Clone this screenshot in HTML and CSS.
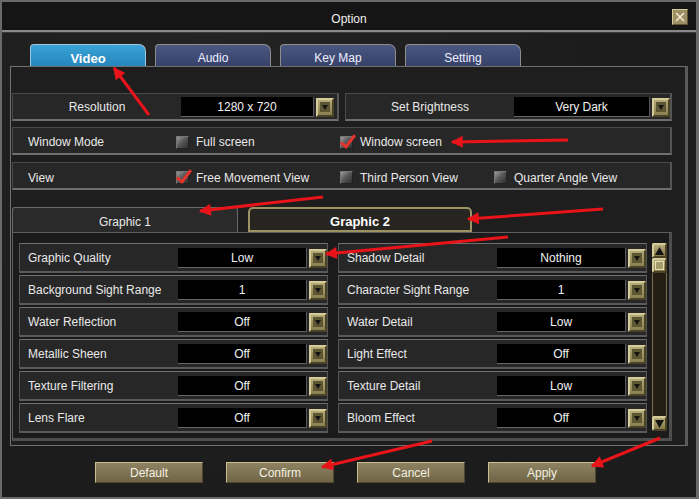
FILE: index.html
```html
<!DOCTYPE html>
<html lang="en">
<head>
  <meta charset="UTF-8">
  <title>Option</title>
  <link rel="stylesheet" href="styles.css">
</head>
<body>
  <div class="window">
    <div class="titlebar">
      <span></span>
      <span class="title">Option</span>
      <span class="close">
        <svg width="10" height="10" viewBox="0 0 10 10"><path d="M1 1L9 9M9 1L1 9" stroke="#f1ead0" stroke-width="1.6"/></svg>
      </span>
    </div>

    <div class="tabs">
      <div class="tab active">Video</div>
      <div class="tab">Audio</div>
      <div class="tab">Key Map</div>
      <div class="tab">Setting</div>
    </div>

    <div class="panel">
      <div class="split">
        <div class="box">
          <div class="cap">Resolution</div>
          <div class="field res">1280 x 720</div>
          <span class="drop"><svg width="10" height="10" viewBox="0 0 10 10"><rect width="10" height="10" fill="#5e5633"/><path d="M2 3H8L5 8Z" fill="#141414"/></svg></span>
        </div>
        <div class="box">
          <div class="cap">Set Brightness</div>
          <div class="field bright">Very Dark</div>
          <span class="drop"><svg width="10" height="10" viewBox="0 0 10 10"><rect width="10" height="10" fill="#5e5633"/><path d="M2 3H8L5 8Z" fill="#141414"/></svg></span>
        </div>
      </div>

      <div class="box wide">
        <div class="name">Window Mode</div>
        <label class="opt g1"><span class="chk"></span>Full screen</label>
        <label class="opt g2"><span class="chk on"></span>Window screen</label>
      </div>

      <div class="box wide view">
        <div class="name">View</div>
        <label class="opt g1"><span class="chk on"></span>Free Movement View</label>
        <label class="opt g2"><span class="chk"></span>Third Person View</label>
        <label class="opt"><span class="chk"></span>Quarter Angle View</label>
      </div>

      <div class="subtabs">
        <div class="subtab">Graphic 1</div>
        <div class="subtab active">Graphic 2</div>
      </div>

      <div class="subpanel">
        <div class="grid">
          <div class="set"><span class="name">Graphic Quality</span><span class="field">Low</span><span class="drop"><svg width="10" height="10" viewBox="0 0 10 10"><rect width="10" height="10" fill="#5e5633"/><path d="M2 3H8L5 8Z" fill="#141414"/></svg></span></div>
          <div class="set"><span class="name">Shadow Detail</span><span class="field">Nothing</span><span class="drop"><svg width="10" height="10" viewBox="0 0 10 10"><rect width="10" height="10" fill="#5e5633"/><path d="M2 3H8L5 8Z" fill="#141414"/></svg></span></div>
          <div class="set"><span class="name">Background Sight Range</span><span class="field">1</span><span class="drop"><svg width="10" height="10" viewBox="0 0 10 10"><rect width="10" height="10" fill="#5e5633"/><path d="M2 3H8L5 8Z" fill="#141414"/></svg></span></div>
          <div class="set"><span class="name">Character Sight Range</span><span class="field">1</span><span class="drop"><svg width="10" height="10" viewBox="0 0 10 10"><rect width="10" height="10" fill="#5e5633"/><path d="M2 3H8L5 8Z" fill="#141414"/></svg></span></div>
          <div class="set"><span class="name">Water Reflection</span><span class="field">Off</span><span class="drop"><svg width="10" height="10" viewBox="0 0 10 10"><rect width="10" height="10" fill="#5e5633"/><path d="M2 3H8L5 8Z" fill="#141414"/></svg></span></div>
          <div class="set"><span class="name">Water Detail</span><span class="field">Low</span><span class="drop"><svg width="10" height="10" viewBox="0 0 10 10"><rect width="10" height="10" fill="#5e5633"/><path d="M2 3H8L5 8Z" fill="#141414"/></svg></span></div>
          <div class="set"><span class="name">Metallic Sheen</span><span class="field">Off</span><span class="drop"><svg width="10" height="10" viewBox="0 0 10 10"><rect width="10" height="10" fill="#5e5633"/><path d="M2 3H8L5 8Z" fill="#141414"/></svg></span></div>
          <div class="set"><span class="name">Light Effect</span><span class="field">Off</span><span class="drop"><svg width="10" height="10" viewBox="0 0 10 10"><rect width="10" height="10" fill="#5e5633"/><path d="M2 3H8L5 8Z" fill="#141414"/></svg></span></div>
          <div class="set"><span class="name">Texture Filtering</span><span class="field">Off</span><span class="drop"><svg width="10" height="10" viewBox="0 0 10 10"><rect width="10" height="10" fill="#5e5633"/><path d="M2 3H8L5 8Z" fill="#141414"/></svg></span></div>
          <div class="set"><span class="name">Texture Detail</span><span class="field">Low</span><span class="drop"><svg width="10" height="10" viewBox="0 0 10 10"><rect width="10" height="10" fill="#5e5633"/><path d="M2 3H8L5 8Z" fill="#141414"/></svg></span></div>
          <div class="set"><span class="name">Lens Flare</span><span class="field">Off</span><span class="drop"><svg width="10" height="10" viewBox="0 0 10 10"><rect width="10" height="10" fill="#5e5633"/><path d="M2 3H8L5 8Z" fill="#141414"/></svg></span></div>
          <div class="set"><span class="name">Bloom Effect</span><span class="field">Off</span><span class="drop"><svg width="10" height="10" viewBox="0 0 10 10"><rect width="10" height="10" fill="#5e5633"/><path d="M2 3H8L5 8Z" fill="#141414"/></svg></span></div>
        </div>

        <div class="scroll">
          <span class="sbtn"><svg width="9" height="8" viewBox="0 0 9 8"><path d="M4.5 0L9 8H0Z" fill="#141414"/></svg></span>
          <span class="thumb"><i></i></span>
          <span class="track"></span>
          <span class="sbtn"><svg width="9" height="8" viewBox="0 0 9 8"><path d="M0 0H9L4.5 8Z" fill="#141414"/></svg></span>
        </div>
      </div>
    </div>

    <div class="buttons">
      <div class="btn">Default</div>
      <div class="btn">Confirm</div>
      <div class="btn">Cancel</div>
      <div class="btn">Apply</div>
    </div>

    <!-- red annotation arrows over the screenshot -->
    <svg class="arrows" width="699" height="499" viewBox="0 0 699 499">
      <defs>
        <marker id="head" viewBox="0 0 10 10" refX="9" refY="5" markerWidth="5" markerHeight="4" orient="auto">
          <path d="M0 0L10 5L0 10Z" fill="#e8141a"/>
        </marker>
      </defs>
      <g stroke="#e8141a" stroke-width="3" fill="none" marker-end="url(#head)">
        <line x1="149" y1="115" x2="114" y2="68"/>
        <line x1="568" y1="140" x2="452" y2="142"/>
        <line x1="323" y1="197" x2="200" y2="211"/>
        <line x1="603" y1="209" x2="468" y2="219"/>
        <line x1="508" y1="237" x2="326" y2="254"/>
        <line x1="432" y1="441" x2="322" y2="467"/>
        <line x1="660" y1="438" x2="592" y2="466"/>
      </g>
    </svg>
  </div>
</body>
</html>
```

FILE: styles.css
```css
:root {
  --bg: #1c1c1c;
  --box: #272727;
  --line: #6e6e6e;
  --text: #e9e9e9;
  --gold-hi: #d6cc9a;
  --gold-lo: #4a4326;
}
html, body {
  margin: 0;
  padding: 0;
  background: #111;
}
body {
  font-family: 'Liberation Sans', Arial, sans-serif;
  font-size: 12px;
  color: var(--text);
}

.window {
  position: relative;
  width: 699px;
  height: 499px;
  box-sizing: border-box;
  border: 2px solid #6a6a6a;
  border-right-width: 3px;
  background:
    radial-gradient(circle at 30% 20%, #242424 0, transparent 60%),
    var(--bg);
}

/* title */
.titlebar {
  display: grid;
  grid-template-columns: 1fr auto 1fr;
  align-items: center;
  height: 26px;
  padding-top: 2px;
  border-bottom: 2px solid #8a8a8a;
  box-shadow: 0 1px 0 #3a3a3a;
  background: #151515;
}
.title {
  color: #f0f0f0;
  padding-top: 4px;
}
.close {
  justify-self: end;
  margin-right: 8px;
  width: 14px;
  height: 14px;
  display: flex;
  align-items: center;
  justify-content: center;
  background: #9c9064;
  border: 1px solid var(--gold-hi);
  border-right-color: #5e5633;
  border-bottom-color: #5e5633;
}

/* main tabs */
.tabs {
  display: flex;
  gap: 9px;
  padding-left: 28px;
  margin-top: 12px;
}
.tab {
  width: 116px;
  height: 22px;
  box-sizing: border-box;
  padding-top: 5px;
  line-height: 17px;
  text-align: center;
  background: linear-gradient(#4a5780, #36426a);
  border: 1px solid #8d8d8d;
  border-bottom: none;
  border-radius: 4px 7px 0 0;
  color: #eef;
}
.tab.active {
  background: linear-gradient(#3aa3d6, #2586bc);
  border-color: #9fc6da;
  font-weight: bold;
  font-size: 13px;
  color: #fff;
}

/* video panel */
.panel {
  margin-left: 8px;
  width: 678px;
  height: 380px;
  box-sizing: border-box;
  border: 1px solid #707070;
  border-right: 3px solid #5a5a5a;
  padding: 26px 13px 0 1px;
  background: #1e1e1e;
}
.box {
  display: flex;
  align-items: center;
  height: 28px;
  box-sizing: border-box;
  padding-top: 1px;
  background: var(--box);
  border: 1px solid #4a4a4a;
  border-bottom: 2px solid var(--line);
  border-right: 2px solid #555;
}
.split {
  display: flex;
  gap: 6px;
}
.split .box {
  width: 327px;
}
.cap {
  width: 168px;
  text-align: center;
}
.field {
  height: 20px;
  line-height: 21px;
  box-sizing: border-box;
  background: #000;
  border-bottom: 1px solid #666;
  border-right: 1px solid #555;
  text-align: center;
  color: #f2f2f2;
}
.field.res { width: 133px; }
.field.bright { width: 136px; }
.drop {
  width: 18px;
  height: 19px;
  box-sizing: border-box;
  margin-left: 2px;
  display: flex;
  align-items: center;
  justify-content: center;
  background: linear-gradient(#b3a979, #8a804f);
  border: 2px solid var(--gold-hi);
  border-right-color: var(--gold-lo);
  border-bottom-color: var(--gold-lo);
}

.box.wide {
  margin-top: 6px;
  padding-top: 3px;
  width: 660px;
}
.box.wide.view {
  margin-top: 7px;
  padding-top: 4px;
}
.name {
  padding-left: 15px;
  width: 148px;
  flex: none;
}
.opt {
  display: flex;
  align-items: center;
  gap: 7px;
}
.opt.g1 { width: 164px; }
.opt.g2 { width: 154px; }
.chk {
  width: 13px;
  height: 13px;
  box-sizing: border-box;
  position: relative;
  background: linear-gradient(135deg, #9a9a9a 0%, #5a5a5a 45%, #2e2e2e 100%);
  border: 1px solid #777;
  border-right-color: #222;
  border-bottom-color: #222;
}
.chk.on::after {
  content: "";
  position: absolute;
  left: 3px;
  top: -5px;
  width: 5px;
  height: 13px;
  border-right: 3px solid #e3342e;
  border-bottom: 3px solid #e3342e;
  transform: rotate(38deg);
}

/* graphic sub tabs */
.subtabs {
  display: flex;
  gap: 10px;
  margin-top: 17px;
}
.subtab {
  width: 226px;
  height: 25px;
  box-sizing: border-box;
  padding-top: 2px;
  line-height: 24px;
  text-align: center;
  background: #2a2a2a;
  border: 1px solid #6a6a6a;
  border-bottom: none;
  border-radius: 3px 3px 0 0;
}
.subtab.active {
  width: 224px;
  padding-top: 1px;
  background: #262521;
  border: 2px solid #9d9262;
  border-radius: 5px 5px 0 0;
  font-weight: bold;
  font-size: 13px;
  color: #fff;
}

.subpanel {
  display: flex;
  gap: 5px;
  width: 660px;
  height: 209px;
  box-sizing: border-box;
  padding: 10px 0 0 6px;
  background: #1b1b1b;
  border: 1px solid #5e5e5e;
  border-right: 3px solid #4e4e4e;
  border-bottom: 3px solid #4e4e4e;
}
.grid {
  display: grid;
  grid-template-columns: 309px 309px;
  column-gap: 10px;
  row-gap: 2px;
  align-content: start;
}
.set {
  display: flex;
  align-items: center;
  height: 30px;
  box-sizing: border-box;
  padding-top: 1px;
  background: var(--box);
  border: 1px solid #555;
  border-top-color: #707070;
  border-bottom: 2px solid #5a5a5a;
}
.set .name {
  padding-left: 8px;
  width: 150px;
}
.set .field {
  width: 130px;
}

/* scrollbar */
.scroll {
  width: 15px;
  height: 188px;
  display: flex;
  flex-direction: column;
}
.sbtn, .thumb {
  height: 15px;
  box-sizing: border-box;
  display: flex;
  align-items: center;
  justify-content: center;
  background: linear-gradient(#b3a979, #857b4a);
  border: 2px solid var(--gold-hi);
  border-right-color: var(--gold-lo);
  border-bottom-color: var(--gold-lo);
  border-radius: 2px;
}
.thumb i {
  width: 7px;
  height: 7px;
  border: 1px solid #e8e0b8;
  background: #a59a6a;
}
.track {
  flex: 1;
  background: #241f12;
  border-left: 1px solid #7a7050;
  border-right: 1px solid #7a7050;
}

/* bottom buttons */
.buttons {
  display: flex;
  gap: 23px;
  padding-left: 93px;
  margin-top: 16px;
}
.btn {
  width: 108px;
  height: 21px;
  box-sizing: border-box;
  line-height: 21px;
  text-align: center;
  background: linear-gradient(#8d8260, #6f6547);
  border: 1px solid #c9bf92;
  border-right-color: #4e4630;
  border-bottom-color: #4e4630;
  color: #f4f0e2;
}

.arrows {
  position: absolute;
  left: -2px;
  top: -2px;
  pointer-events: none;
}
```
